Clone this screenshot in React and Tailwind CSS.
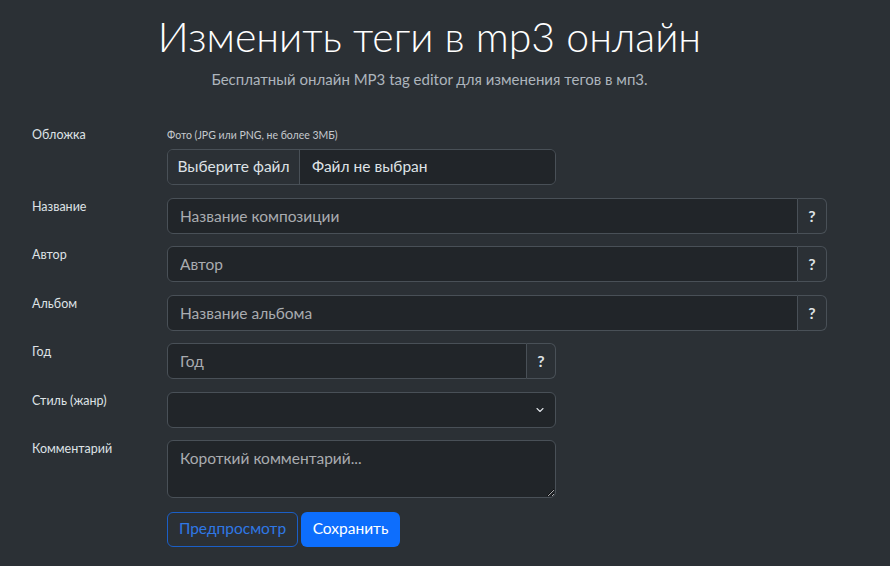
import React from 'react';

const FONT = "font-['Lato','Noto_Sans',sans-serif]";

function Row({ label, children }) {
  return (
    <div className="flex flex-row items-start">
      <div className="w-[135px] shrink-0 text-[12.5px] leading-[18px] text-[#dee2e6]">
        {label}
      </div>
      <div className="flex-1">{children}</div>
    </div>
  );
}

function HelpInput({ placeholder, half }) {
  return (
    <div className={`flex flex-row h-[36px] ${half ? 'w-[389px]' : 'w-full'}`}>
      <input
        type="text"
        placeholder={placeholder}
        className="flex-1 min-w-0 h-full px-3 bg-[#212529] border border-[#495057] rounded-l-[6px] text-[15.5px] text-[#dee2e6] placeholder:text-[#a9acb0] outline-none"
      />
      <button
        type="button"
        className="w-[29px] h-full bg-[#2b3035] border border-l-0 border-[#495057] rounded-r-[6px] text-[16px] font-bold text-[#dee2e6] flex items-center justify-center"
      >
        ?
      </button>
    </div>
  );
}

function App() {
  return (
    <div className={`min-h-[566px] bg-[#2b3035] ${FONT} pl-[32px] pr-[63px] pt-[12px]`}>
      <div className="text-center">
        <h1 className="text-[41px] leading-[50px] font-light text-white">
          Изменить теги в mp3 онлайн
        </h1>
        <p className="mt-[7px] text-[15px] leading-[20px] text-[#adb5bd]">
          Бесплатный онлайн MP3 tag editor для изменения тегов в мп3.
        </p>
      </div>

      <form className="mt-[37px] flex flex-col gap-[12.5px]">
        <Row label="Обложка">
          <div className="text-[10.5px] leading-[18px] text-[#c5c9ce]">Фото (JPG или PNG, не более 3МБ)</div>
          <div className="mt-[5px] w-[389px] h-[36px] flex flex-row border border-[#495057] rounded-[6px] overflow-hidden text-[15.5px] text-[#dee2e6]">
            <span className="w-[132px] shrink-0 bg-[#2b3035] border-r border-[#495057] flex items-center justify-center">Выберите файл</span>
            <span className="flex-1 px-3 bg-[#212529] flex items-center">Файл не выбран</span>
          </div>
        </Row>
        <Row label="Название">
          <HelpInput placeholder="Название композиции" />
        </Row>
        <Row label="Автор">
          <HelpInput placeholder="Автор" />
        </Row>
        <Row label="Альбом">
          <HelpInput placeholder="Название альбома" />
        </Row>
        <Row label="Год">
          <HelpInput placeholder="Год" half />
        </Row>
        <Row label="Стиль (жанр)">
          <div className="relative w-[389px] h-[36px]">
            <select className="appearance-none w-full h-full px-3 bg-[#212529] border border-[#495057] rounded-[6px] text-[15.5px] text-[#dee2e6] outline-none">
              <option value=""></option>
            </select>
            <svg
              className="absolute right-[11px] top-[14px] pointer-events-none"
              width="10"
              height="8"
              viewBox="0 0 16 16"
            >
              <path d="M2 5l6 6 6-6" fill="none" stroke="#dee2e6" strokeWidth="2.2" strokeLinecap="round" strokeLinejoin="round" />
            </svg>
          </div>
        </Row>
        <Row label="Комментарий">
          <textarea
            placeholder="Короткий комментарий..."
            className="block w-[389px] h-[58px] px-3 py-[5px] bg-[#212529] border border-[#495057] rounded-[6px] text-[15.5px] leading-[24px] text-[#dee2e6] placeholder:text-[#a9acb0] outline-none"
          />
        </Row>
        <div className="pl-[135px] mt-[1px] flex flex-row gap-[3px]">
          <button
            type="button"
            className="h-[35px] w-[131px] border border-[#1b5fc7] rounded-[6px] text-[15.5px] text-[#2f78e6]"
          >
            Предпросмотр
          </button>
          <button
            type="button"
            className="h-[35px] w-[99px] bg-[#0d6efd] rounded-[6px] text-[15.5px] text-white"
          >
            Сохранить
          </button>
        </div>
      </form>
    </div>
  );
}

export default App;
